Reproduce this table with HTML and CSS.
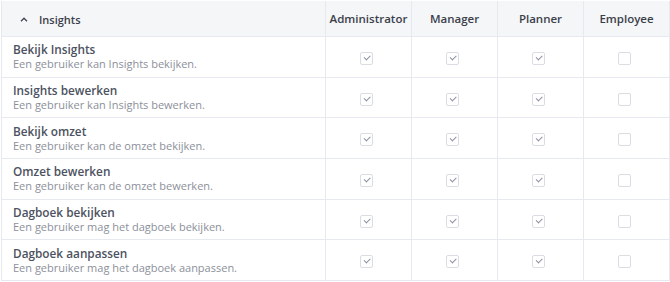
FILE: index.html
```html
<!DOCTYPE html>
<html>
<head>
<meta charset="utf-8">
<link rel="stylesheet" href="styles.css">
</head>
<body>
<table class="perm">
  <colgroup>
    <col class="col-name">
    <col class="col-role">
    <col class="col-role">
    <col class="col-role">
    <col class="col-role">
  </colgroup>
  <thead>
    <tr>
      <th class="group"><span class="caret"><svg width="8" height="5" viewBox="0 0 8 5"><path d="M1 4.2 L4 1.2 L7 4.2" fill="none" stroke="#3f4554" stroke-width="1.3"/></svg></span>Insights</th>
      <th class="role">Administrator</th>
      <th class="role">Manager</th>
      <th class="role">Planner</th>
      <th class="role">Employee</th>
    </tr>
  </thead>
  <tbody>
    <tr>
      <td class="name"><div class="title">Bekijk Insights</div><div class="desc">Een gebruiker kan Insights bekijken.</div></td>
      <td class="cell"><span class="cb on"></span></td>
      <td class="cell"><span class="cb on"></span></td>
      <td class="cell"><span class="cb on"></span></td>
      <td class="cell"><span class="cb"></span></td>
    </tr>
    <tr>
      <td class="name"><div class="title">Insights bewerken</div><div class="desc">Een gebruiker kan Insights bewerken.</div></td>
      <td class="cell"><span class="cb on"></span></td>
      <td class="cell"><span class="cb on"></span></td>
      <td class="cell"><span class="cb on"></span></td>
      <td class="cell"><span class="cb"></span></td>
    </tr>
    <tr>
      <td class="name"><div class="title">Bekijk omzet</div><div class="desc">Een gebruiker kan de omzet bekijken.</div></td>
      <td class="cell"><span class="cb on"></span></td>
      <td class="cell"><span class="cb on"></span></td>
      <td class="cell"><span class="cb on"></span></td>
      <td class="cell"><span class="cb"></span></td>
    </tr>
    <tr>
      <td class="name"><div class="title">Omzet bewerken</div><div class="desc">Een gebruiker kan de omzet bewerken.</div></td>
      <td class="cell"><span class="cb on"></span></td>
      <td class="cell"><span class="cb on"></span></td>
      <td class="cell"><span class="cb on"></span></td>
      <td class="cell"><span class="cb"></span></td>
    </tr>
    <tr>
      <td class="name"><div class="title">Dagboek bekijken</div><div class="desc">Een gebruiker mag het dagboek bekijken.</div></td>
      <td class="cell"><span class="cb on"></span></td>
      <td class="cell"><span class="cb on"></span></td>
      <td class="cell"><span class="cb on"></span></td>
      <td class="cell"><span class="cb"></span></td>
    </tr>
    <tr>
      <td class="name"><div class="title">Dagboek aanpassen</div><div class="desc">Een gebruiker mag het dagboek aanpassen.</div></td>
      <td class="cell"><span class="cb on"></span></td>
      <td class="cell"><span class="cb on"></span></td>
      <td class="cell"><span class="cb on"></span></td>
      <td class="cell"><span class="cb"></span></td>
    </tr>
  </tbody>
</table>
</body>
</html>
```
FILE: styles.css
```css
html, body {
  margin: 0;
  padding: 0;
  background: #ffffff;
}
body {
  padding: 1px 0 0 1px;
  font-family: "Open Sans", "Noto Sans", sans-serif;
}
.perm {
  border-collapse: collapse;
  table-layout: fixed;
  width: 668px;
}
.col-name {
  width: 324px;
}
.col-role {
  width: 86px;
}
.perm th, .perm td {
  padding: 0;
  border: 1px solid #e7e9f0;
}
.perm thead th {
  background: #f5f6f8;
  height: 35px;
  border-top: none;
  font-weight: 600;
  color: #3b3f4a;
}
.group {
  text-align: left;
  font-size: 11px;
  padding-left: 18px !important;
}
.caret {
  display: inline-block;
  width: 19px;
  vertical-align: 2px;
}
.role {
  font-size: 11.5px;
  text-align: center;
}
.perm tbody td {
  height: 39.67px;
}
.name {
  padding-left: 11px !important;
  vertical-align: middle;
}
.title {
  font-size: 11.8px;
  font-weight: 600;
  color: #4c5261;
  line-height: 15px;
}
.desc {
  font-size: 11px;
  color: #8c909a;
  line-height: 14px;
}
.cell {
  text-align: center;
  vertical-align: middle;
}
.cb {
  display: inline-block;
  width: 11px;
  height: 11px;
  border: 1px solid #dadde3;
  border-radius: 2px;
  background: #fff;
  position: relative;
  vertical-align: middle;
  margin-left: -5px;
}
.cb.on::after {
  content: "";
  position: absolute;
  left: 3px;
  top: 2px;
  width: 5px;
  height: 2.5px;
  border-left: 1px solid #8b91a0;
  border-bottom: 1px solid #8b91a0;
  transform: rotate(-45deg);
}
```
